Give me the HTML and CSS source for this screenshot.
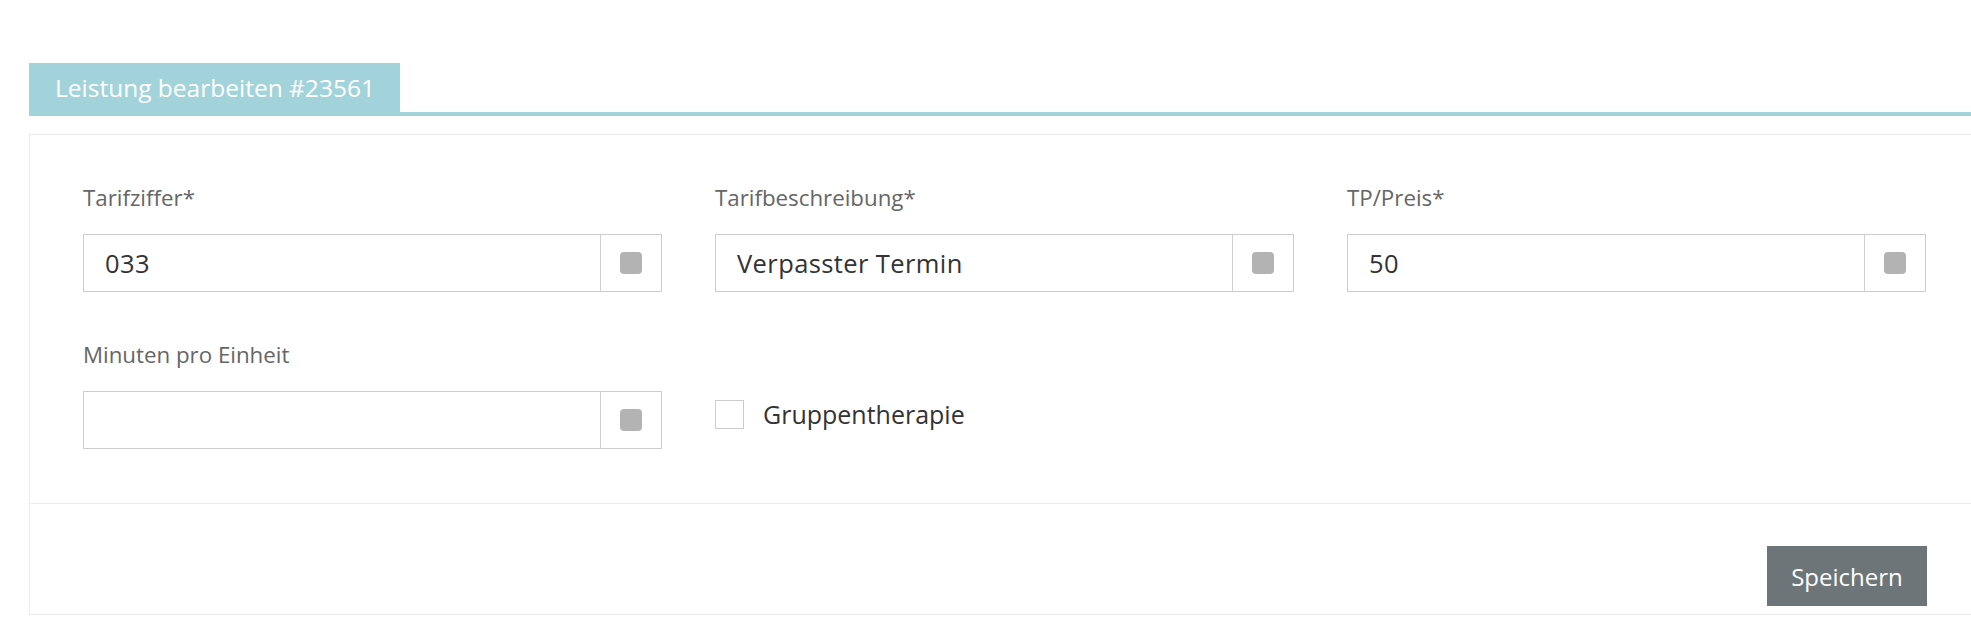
FILE: index.html
```html
<!DOCTYPE html>
<html lang="de">
<head>
<meta charset="utf-8">
<title>Leistung bearbeiten</title>
<link rel="stylesheet" href="styles.css">
</head>
<body>
<div class="wrap">
  <div class="tabs">
    <div class="tab">Leistung bearbeiten #23561</div>
  </div>
  <div class="panel">
    <div class="panel-body">
      <div class="field">
        <label class="label">Tarifziffer*</label>
        <div class="input-group">
          <div class="input">033</div>
          <div class="addon"><span class="sq"></span></div>
        </div>
      </div>
      <div class="field">
        <label class="label">Tarifbeschreibung*</label>
        <div class="input-group">
          <div class="input">Verpasster Termin</div>
          <div class="addon"><span class="sq"></span></div>
        </div>
      </div>
      <div class="field">
        <label class="label">TP/Preis*</label>
        <div class="input-group">
          <div class="input">50</div>
          <div class="addon"><span class="sq"></span></div>
        </div>
      </div>
      <div class="field">
        <label class="label">Minuten pro Einheit</label>
        <div class="input-group">
          <div class="input"></div>
          <div class="addon"><span class="sq"></span></div>
        </div>
      </div>
      <div class="field check-field">
        <span class="checkbox"></span>
        <span class="check-label">Gruppentherapie</span>
      </div>
    </div>
    <div class="panel-footer">
      <button class="btn">Speichern</button>
    </div>
  </div>
</div>
</body>
</html>
```
FILE: styles.css
```css
html, body {
  margin: 0;
  padding: 0;
  background: #ffffff;
  overflow: hidden;
}
body {
  font-family: "Open Sans", Lato, "Liberation Sans", sans-serif;
  color: #333;
}
.wrap {
  width: 1951px;
  margin-left: 29px;
  padding-top: 63px;
}
.tabs {
  display: flex;
  border-bottom: 4px solid #a3d3da;
}
.tab {
  background: #a3d3da;
  color: #ffffff;
  height: 49px;
  line-height: 49px;
  padding: 0 26px;
  font-size: 24.5px;
  width: 319px;
  white-space: nowrap;
}
.panel {
  margin-top: 18px;
  border: 1px solid #ececec;
}
.panel-body {
  display: grid;
  grid-template-columns: 579px 579px 579px;
  column-gap: 53px;
  row-gap: 51px;
  padding: 51px 53px 54px 53px;
}
.field {
  display: flex;
  flex-direction: column;
}
.label {
  font-size: 22.3px;
  line-height: 24px;
  color: #666;
  margin-bottom: 24px;
}
.input-group {
  display: flex;
  height: 58px;
  box-sizing: border-box;
  border: 1px solid #cccccc;
}
.input {
  flex: 1;
  padding-left: 21px;
  font-size: 25.5px;
  letter-spacing: 0.4px;
  line-height: 56px;
  color: #333;
}
.addon {
  width: 60px;
  border-left: 1px solid #d0d0d0;
  display: flex;
  align-items: center;
  justify-content: center;
}
.sq {
  width: 22px;
  height: 22px;
  border-radius: 4px;
  background: #b3b3b3;
}
.check-field {
  flex-direction: row;
  align-items: center;
  margin-top: 57px;
  align-self: start;
  gap: 19px;
}
.checkbox {
  width: 29px;
  height: 29px;
  box-sizing: border-box;
  border: 1px solid #cccccc;
  background: #fff;
}
.check-label {
  font-size: 25px;
  line-height: 29px;
  color: #333;
}
.panel-footer {
  border-top: 1px solid #ececec;
  padding: 42px 52px 8px 52px;
  display: flex;
  justify-content: flex-end;
}
.btn {
  background: #6d7578;
  color: #ffffff;
  border: none;
  width: 160px;
  height: 60px;
  font-family: "Open Sans", Lato, "Liberation Sans", sans-serif;
  font-size: 24px;
  padding: 0;
  cursor: pointer;
}
```
